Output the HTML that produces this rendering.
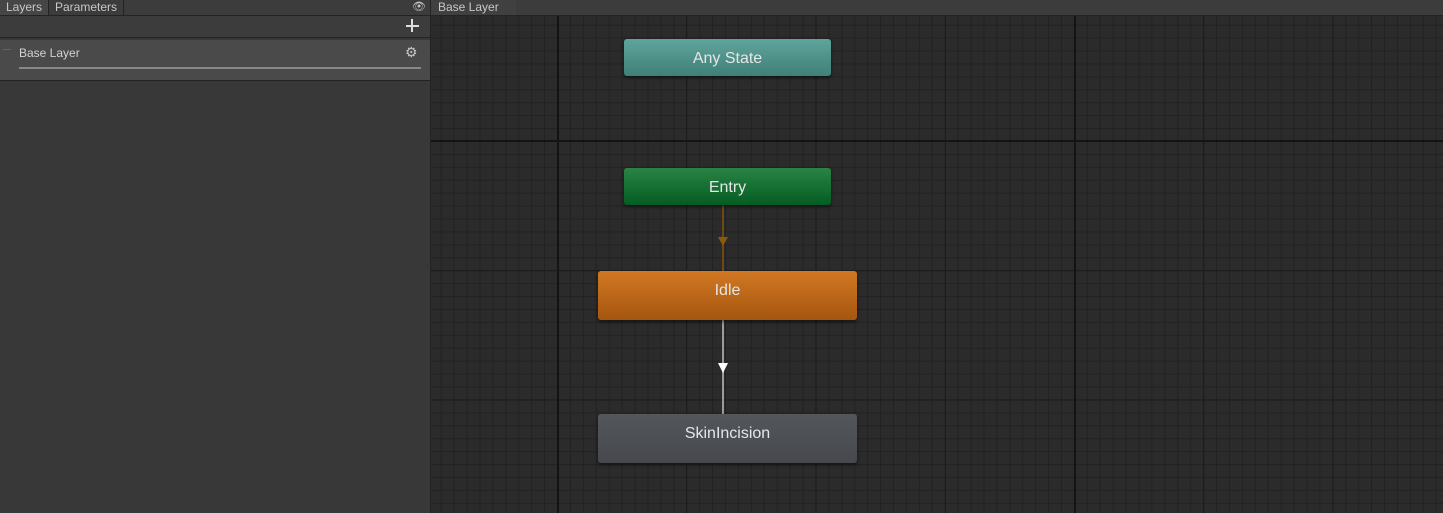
<!DOCTYPE html>
<html><head><style>
body{margin:0;width:1443px;height:513px;overflow:hidden;background:#2a2a2a;font-family:"Liberation Sans",sans-serif;position:relative}
#grid{position:absolute;left:0;top:0;width:1443px;height:513px;background-color:#2b2b2b;
background-image:
linear-gradient(90deg,#141414 2px,transparent 2px),
linear-gradient(0deg,#141414 2px,transparent 2px),
linear-gradient(90deg,#1b1b1b 1px,transparent 1px),
linear-gradient(0deg,#1b1b1b 1px,transparent 1px),
linear-gradient(90deg,#222 1px,transparent 1px),
linear-gradient(0deg,#222 1px,transparent 1px);
background-size:517px 517px,517px 517px,129.25px 129.25px,129.25px 129.25px,12.925px 12.925px,12.925px 12.925px;
background-position:557px 0,0 142px,557px 0,0 142px,557px 0,0 142px;}
#left{position:absolute;left:0;top:0;width:430px;height:513px;background:#383838;border-right:1px solid #232323}
#top{position:absolute;left:0;top:0;width:1443px;height:15px;background:#3c3c3c;border-bottom:1px solid #232323}
.t{position:absolute;top:0;height:15px;font-size:12px;color:#c8c8c8;line-height:14px}
.node{position:absolute;border-radius:3px;color:#e6e6e6;font-size:16px;text-align:center;box-shadow:0 2px 3px rgba(0,0,0,.5)}
</style></head><body>
<div id="grid"></div>
<div id="left">
 <div style="position:absolute;top:16px;left:0;width:430px;height:21px;background:#3c3c3c;border-bottom:1px solid #232323"></div>
 <div style="position:absolute;left:406px;width:13px;height:2px;background:#ddd;top:25px"></div>
 <div style="position:absolute;top:19px;left:411px;width:2px;height:13px;background:#ddd"></div>
 <div style="position:absolute;top:40px;left:0;width:430px;height:40px;background:#4a4a4a;border-bottom:1px solid #232323"></div>
 <div style="position:absolute;top:49px;left:3px;width:8px;height:1px;background:#666"></div>
 <div style="position:absolute;top:46px;left:19px;font-size:12px;color:#d2d2d2">Base Layer</div>
 <div style="position:absolute;top:67px;left:19px;width:402px;height:2px;background:#888"></div>
 <div style="position:absolute;top:44px;left:405px;font-size:14px;color:#c8c8c8">⚙</div>
</div>
<div id="top">
 <div class="t" style="left:0;width:48px;background:#464646;border-right:1px solid #232323;text-align:center">Layers</div>
 <div class="t" style="left:49px;width:74px;background:#3c3c3c;border-right:1px solid #232323;text-align:center">Parameters</div>
 <div class="t" style="left:412px;font-size:11px">👁</div>
 <div class="t" style="left:430px;width:78px;background:#404040;padding-left:7px;border-left:1px solid #232323">Base Layer</div>
</div>
<div style="position:absolute;left:722px;top:205px;width:2px;height:66px;background:#6b4a12"></div>
<div style="position:absolute;left:718px;top:237px;width:0;height:0;border-left:5px solid transparent;border-right:5px solid transparent;border-top:9px solid #8a5a0a"></div>
<div style="position:absolute;left:722px;top:320px;width:2px;height:95px;background:#9a9a9a"></div>
<div style="position:absolute;left:718px;top:363px;width:0;height:0;border-left:5px solid transparent;border-right:5px solid transparent;border-top:10px solid #fff"></div>
<div class="node" style="left:624px;top:39px;width:207px;height:37px;line-height:39px;background:linear-gradient(#5fa59c,#3f8078)">Any State</div>
<div class="node" style="left:624px;top:168px;width:207px;height:37px;line-height:39px;background:linear-gradient(#2a8444,#045c23)">Entry</div>
<div class="node" style="left:598px;top:271px;width:259px;height:49px;line-height:40px;background:linear-gradient(#d27823,#a5560f)">Idle</div>
<div class="node" style="left:598px;top:414px;width:259px;height:49px;line-height:40px;background:linear-gradient(#53575c,#46484c)">SkinIncision</div>
</body></html>
